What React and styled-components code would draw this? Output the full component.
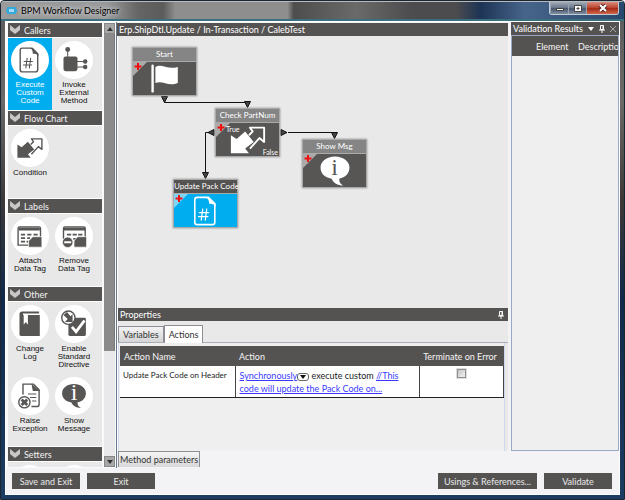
import React from 'react';
import styled, { createGlobalStyle } from 'styled-components';

const GlobalStyle = createGlobalStyle`
    * {
        box-sizing: border-box;
    }
    body {
        margin: 0;
        font-family: Lato, 'Open Sans', sans-serif;
        font-size: 9px;
        color: #1c1c1c;
    }
    button, input {
        font-family: inherit;
        font-size: inherit;
        margin: 0;
    }
`;

const glyphs = {
    code: (
        <g fill="none" stroke="currentColor" strokeWidth="2">
            <path d="M9 3h14l8 8v23a3 3 0 0 1-3 3H9a3 3 0 0 1-3-3V6a3 3 0 0 1 3-3z" />
            <path d="M20 3h4l8 8v4c-2-4-5-4-8-4 0-4-1-6-4-8z" fill="currentColor" stroke="none" />
            <path d="M16 17l-2 15M21 17l-2 15M11 22h13M10 27h13" strokeWidth="1.500" />
        </g>
    ),
    method: (
        <g fill="currentColor">
            <rect x="5" y="15" width="20" height="21" rx="3" />
            <circle cx="11" cy="5" r="3.500" />
            <circle cx="36" cy="22" r="3.200" />
            <circle cx="36" cy="30" r="3.200" />
            <path d="M11 6v10M24 22h10M24 30h10" stroke="currentColor" strokeWidth="1.500" />
        </g>
    ),
    condition: (
        <g fill="currentColor">
            <path d="M2 15v19h19l-4-5 9-7-9-11-9 8z" />
            <path
                d="M21 15l4-4-3-4h15v15l-5-4-10 11"
                fill="none"
                stroke="currentColor"
                strokeWidth="2"
                strokeLinejoin="round"
            />
        </g>
    ),
    attach: (
        <g fill="currentColor">
            <path d="M5 7h28a2 2 0 0 1 2 2v24H3V9a2 2 0 0 1 2-2z" fill="none" stroke="currentColor" strokeWidth="2" />
            <path d="M4 8h30v4H4z" />
            <path d="M7 18h6M16 18h6M25 18h6M7 23h6M16 23h4M7 28h6M15 28h3" stroke="currentColor" strokeWidth="2.500" />
            <path d="M24 21h13v15H18V27z" stroke="#fff" />
        </g>
    ),
    remove: (
        <g fill="currentColor">
            <path d="M5 24V9a2 2 0 0 1 2-2h27a2 2 0 0 1 2 2v18" fill="none" stroke="currentColor" strokeWidth="2" />
            <path d="M5 8h31v4H5z" />
            <path d="M10 18h6M18 18h6M26 18h6M19 24h4" stroke="currentColor" strokeWidth="2.500" />
            <path d="M25 21h13v15H20V27z" stroke="#fff" />
            <circle cx="11" cy="29" r="7.500" stroke="#fff" />
            <path d="M6 29h10" stroke="#fff" strokeWidth="3" />
        </g>
    ),
    log: (
        <g fill="currentColor">
            <path d="M5 9V6a4 4 0 0 1 4-4h24v3H10v2h24v30H7a2 2 0 0 1-2-2z" />
            <path d="M11 6h6v15l-3-4-3 4z" fill="#fff" />
        </g>
    ),
    enable: (
        <g fill="currentColor">
            <rect x="12" y="11" width="25" height="26" rx="2" />
            <path d="M17 24l6 7 12-16" fill="none" stroke="#fff" strokeWidth="4" />
            <circle cx="12" cy="11" r="9.500" fill="#fff" stroke="currentColor" strokeWidth="2" />
            <path d="M5 7l5-4 5 6 3-3v11H7l4-4z" />
        </g>
    ),
    raise: (
        <g fill="none" stroke="currentColor" strokeWidth="2">
            <path d="M10 18V3h15l8 8v21a3 3 0 0 1-3 3h-8" />
            <path d="M22 2l12 11H24z" fill="currentColor" stroke="none" />
            <path d="M17 17h12M20 22h9M23 27h6" strokeWidth="1.500" />
            <circle cx="12" cy="29" r="8" />
            <path d="M8 25l8 8M16 25l-8 8" strokeWidth="4" />
        </g>
    ),
    flag: (
        <g fill="currentColor">
            <rect x="3" y="2" width="3" height="35" rx="1.500" />
            <path d="M8 5c8-5 14 4 28 0v20c-12 5-19-4-28 0z" />
        </g>
    ),
    message: (
        <g fill="currentColor">
            <path d="M20 3c10 0 17 6 17 13s-5 12-12 13c0 4 1 6 5 8-7 0-12-3-14-8C8 28 3 23 3 16S10 3 20 3z" />
        </g>
    ),
};

const Svg = styled.svg`
    display: block;
    width: ${(p) => p.$size}px;
    height: ${(p) => p.$size}px;
    flex: none;
    overflow: visible;
`;

const Bubble = styled.span`
    display: grid;
    place-items: center;

    svg, b {
        grid-area: 1 / 1;
    }
    b {
        z-index: 1;
        padding-bottom: 8px;
        font: 24px/24px 'Liberation Serif', serif;
        color: ${(p) => p.$ink};
    }
`;

const Glyph = ({ name, size, ink = '#fff' }) => {
    const drawing = (
        <Svg $size={size} viewBox="0 0 40 40" aria-hidden="true">
            {glyphs[name]}
        </Svg>
    );
    if (name !== 'message') return drawing;
    return (
        <Bubble $ink={ink}>
            {drawing}
            <b>i</b>
        </Bubble>
    );
};

const Pin = () => (
    <Svg $size={8} viewBox="0 0 8 8" aria-hidden="true">
        <path d="M2.500 0.500h3v4h-3zM1 5h6M4 5v3M5 0.500v4" fill="none" stroke="#fff" />
    </Svg>
);

const groups = [
    {
        title: 'Callers',
        items: [
            { icon: 'code', label: 'Execute Custom Code', active: true },
            { icon: 'method', label: 'Invoke External Method' },
        ],
    },
    { title: 'Flow Chart', items: [{ icon: 'condition', label: 'Condition' }] },
    {
        title: 'Labels',
        items: [
            { icon: 'attach', label: 'Attach Data Tag' },
            { icon: 'remove', label: 'Remove Data Tag' },
        ],
    },
    {
        title: 'Other',
        items: [
            { icon: 'log', label: 'Change Log' },
            { icon: 'enable', label: 'Enable Standard Directive' },
            { icon: 'raise', label: 'Raise Exception' },
            { icon: 'message', label: 'Show Message' },
        ],
    },
    { title: 'Setters', items: [{ icon: 'code' }, { icon: 'code' }] },
];

const nodes = [
    { title: 'Start', icon: 'flag', size: 32, x: 14, y: 11 },
    { title: 'Check PartNum', icon: 'condition', size: 38, x: 97, y: 72, yes: 'True', no: 'False' },
    { title: 'Show Msg', icon: 'message', size: 34, x: 184, y: 103 },
    { title: 'Update Pack Code', icon: 'code', size: 32, x: 55, y: 143, active: true },
];

const Palette = () => (
    <Sidebar>
        <PaletteList>
            {groups.map((group) => (
                <section key={group.title}>
                    <GroupHeader type="button">
                        <Svg $size={10} viewBox="0 0 10 10" aria-hidden="true">
                            <path d="M0 0l5 4 5-4v5L5 9 0 5z" fill="#c8c8c8" />
                        </Svg>
                        {group.title}
                    </GroupHeader>
                    <GroupGrid>
                        {group.items.map((item, i) => (
                            <PaletteItem type="button" key={i} $active={item.active}>
                                <Disc>
                                    <Glyph name={item.icon} size={28} />
                                </Disc>
                                <span>{item.label}</span>
                            </PaletteItem>
                        ))}
                    </GroupGrid>
                </section>
            ))}
        </PaletteList>
        <ScrollBar>
            <ScrollButton type="button" aria-label="Scroll up">
                <Svg $size={6} viewBox="0 0 6 6" aria-hidden="true">
                    <path d="M0 5l3-4 3 4z" fill="#333" />
                </Svg>
            </ScrollButton>
            <ScrollTrack>
                <ScrollThumb />
            </ScrollTrack>
            <ScrollButton type="button" aria-label="Scroll down">
                <Svg $size={6} viewBox="0 0 6 6" aria-hidden="true">
                    <path d="M0 1l3 4 3-4z" fill="#333" />
                </Svg>
            </ScrollButton>
        </ScrollBar>
    </Sidebar>
);

const Diagram = () => (
    <Canvas>
        <Links viewBox="0 0 390 274" aria-hidden="true">
            <g fill="none" stroke="#111">
                <path d="M46.500 62v4.500h83V68" />
                <path d="M93 96.500h-5.500V139" />
                <path d="M170 96.500h46.500V99" />
            </g>
            <g fill="#444" stroke="#111">
                <path d="M43.500 60.500h6l-3 6z" />
                <path d="M126.500 65.500h6l-3 6z" />
                <path d="M96 93.500v6l-6-3z" />
                <path d="M163 93.500v6l6-3z" />
                <path d="M213.500 96.500h6l-3 6z" />
                <path d="M84.500 136.500h6l-3 6z" />
            </g>
        </Links>
        {nodes.map((node) => (
            <Node key={node.title} style={{ left: node.x, top: node.y }}>
                <NodeTitle $active={node.active}>{node.title}</NodeTitle>
                <NodeBody $active={node.active}>
                    <Corner viewBox="0 0 14 14" aria-hidden="true">
                        <path d="M0 0h14L0 14z" fill="#fff" fillOpacity="0.500" />
                        <path d="M5 1v7M1.500 4.500h7" stroke="#f01010" strokeWidth="2" />
                    </Corner>
                    {node.yes && <Port $side="left">{node.yes}</Port>}
                    <Glyph name={node.icon} size={node.size} ink="#575655" />
                    {node.no && <Port>{node.no}</Port>}
                </NodeBody>
            </Node>
        ))}
    </Canvas>
);

const Properties = () => (
    <PropertiesPanel>
        <PanelHeader>
            <PanelTitle>Properties</PanelTitle>
            <IconButton type="button" aria-label="Pin properties">
                <Pin />
            </IconButton>
        </PanelHeader>
        <Tabs role="tablist">
            <Tab type="button" role="tab">Variables</Tab>
            <Tab type="button" role="tab" aria-selected="true" $active>Actions</Tab>
        </Tabs>
        <TabPanel>
            <ActionTable>
                <colgroup>
                    <NameCol />
                    <col />
                    <ErrorCol />
                </colgroup>
                <thead>
                    <tr>
                        <th>Action Name</th>
                        <th>Action</th>
                        <th>Terminate on Error</th>
                    </tr>
                </thead>
                <tbody>
                    <tr>
                        <td>Update Pack Code on Header</td>
                        <Expression>
                            <a href="#mode">Synchronously</a>
                            <ModeButton type="button" aria-label="Change mode">
                                <Svg $size={6} viewBox="0 0 6 6" aria-hidden="true">
                                    <path d="M0 1h6L3 5z" fill="#111" />
                                </Svg>
                            </ModeButton>
                            {' execute custom '}
                            <a href="#code">{'//This code will update the Pack Code on...'}</a>
                        </Expression>
                        <CheckCell>
                            <Check type="checkbox" aria-label="Terminate on Error" />
                        </CheckCell>
                    </tr>
                </tbody>
            </ActionTable>
        </TabPanel>
    </PropertiesPanel>
);

const App = () => {
    return (
        <Window>
            <GlobalStyle />
            <TitleBar>
                <Svg $size={11} viewBox="0 0 11 11" aria-hidden="true">
                    <path d="M1 2h9v2h1v3h-1v2H1V7H0V4h1z" fill="#35a8dc" />
                    <rect x="3" y="4" width="5" height="3" fill="#a6dcf3" />
                </Svg>
                <h1>BPM Workflow Designer</h1>
                <WindowButtons>
                    <WindowButton type="button" aria-label="Minimize">
                        <Svg $size={10} viewBox="0 0 10 10" aria-hidden="true">
                            <rect x="1.500" y="5.500" width="7" height="2" fill="#fff" stroke="#444" />
                        </Svg>
                    </WindowButton>
                    <WindowButton type="button" aria-label="Maximize">
                        <Svg $size={10} viewBox="0 0 10 10" aria-hidden="true">
                            <path d="M1.500 2.500h7v6h-7z" fill="#fff" stroke="#444" />
                            <path d="M4 5h2v1H4z" fill="#444" stroke="#444" />
                        </Svg>
                    </WindowButton>
                    <WindowButton type="button" aria-label="Close" $close>
                        <Svg $size={10} viewBox="0 0 10 10" aria-hidden="true">
                            <path d="M2 2l6 6M8 2L2 8" stroke="#5d2b25" strokeWidth="4" />
                            <path d="M2 2l6 6M8 2L2 8" stroke="#fff" strokeWidth="2" />
                        </Svg>
                    </WindowButton>
                </WindowButtons>
            </TitleBar>
            <Client>
                <Body>
                    <Palette />
                    <Content>
                        <Workspace>
                            <Main>
                                <PanelHeader>
                                    <PanelTitle>Erp.ShipDtl.Update / In-Transaction / CalebTest</PanelTitle>
                                </PanelHeader>
                                <Diagram />
                                <Properties />
                            </Main>
                            <Validation>
                                <PanelHeader>
                                    <PanelTitle>Validation Results</PanelTitle>
                                    <HeaderTools>
                                        <IconButton type="button" aria-label="Panel menu">
                                            <Svg $size={6} viewBox="0 0 6 6" aria-hidden="true">
                                                <path d="M0 1h6L3 5z" fill="#fff" />
                                            </Svg>
                                        </IconButton>
                                        <IconButton type="button" aria-label="Pin results">
                                            <Pin />
                                        </IconButton>
                                        <IconButton type="button" aria-label="Close results">
                                            <Svg $size={6} viewBox="0 0 6 6" aria-hidden="true">
                                                <path d="M0 0l6 6M6 0L0 6" stroke="#aaa" />
                                            </Svg>
                                        </IconButton>
                                    </HeaderTools>
                                </PanelHeader>
                                <Results>
                                    <ResultsTable>
                                        <thead>
                                            <tr>
                                                <th>Element</th>
                                                <th>Description</th>
                                            </tr>
                                        </thead>
                                    </ResultsTable>
                                </Results>
                            </Validation>
                        </Workspace>
                        <BottomTabs>
                            <BottomTab type="button">Method parameters</BottomTab>
                        </BottomTabs>
                    </Content>
                </Body>
                <Footer>
                    <FooterButton type="button">Save and Exit</FooterButton>
                    <FooterButton type="button">Exit</FooterButton>
                    <Spacer />
                    <FooterButton type="button" $wide>Usings &amp; References...</FooterButton>
                    <FooterButton type="button">Validate</FooterButton>
                </Footer>
            </Client>
        </Window>
    );
};

const Window = styled.div`
    height: 100vh;
    display: flex;
    flex-direction: column;
    padding: 0 4px 4px;
    border: 1px solid #1c2632;
    border-radius: 4px 4px 0 0;
    overflow: hidden;
    background: linear-gradient(#5b5b5c, #6a6a6b 20%, #3c3838 40%, #10294a 60%, #1c3c62);
`;

const TitleBar = styled.header`
    height: 20px;
    flex: none;
    margin: 0 -4px;
    padding: 0 5px;
    display: flex;
    align-items: center;
    gap: 4px;
    border-top: 1px solid #b5babd;
    border-bottom: 2px solid #39707f;
    background: linear-gradient(90deg, #9b9b9c, #98999a 17%, #656565 22%, #5c5b5b 26%, #8e8e8e 28%, #8e8e8e 46%, #4e4d4e 47%, #6a6a6a 57%, #4c4c4e 66%, #4c4c4e 73%, #1d3455 77%, #47648a 84%, #27486e);

    h1 {
        flex: 1;
        margin: 0;
        font-size: 9px;
        font-weight: 400;
        color: #000;
        text-shadow: 0 0 5px #fff;
    }
`;

const WindowButtons = styled.div`
    align-self: flex-start;
    display: flex;
    border: 1px solid #c3cad2;
    border-top: 0;
    border-radius: 0 0 3px 3px;
    overflow: hidden;
`;

const WindowButton = styled.button`
    width: ${(p) => (p.$close ? 32 : 18)}px;
    height: 12px;
    padding: 0;
    display: grid;
    place-items: center;
    border: 0;
    border-left: 1px solid #9aa5b3;
    background: ${(p) => (p.$close ? 'linear-gradient(#d98b7c, #b8402c 50%, #a52a16 55%, #d0674c)' : 'linear-gradient(#a3abb5, #66748a 50%, #47566d 55%, #7f8ea3)')};
`;

const Client = styled.div`
    flex: 1;
    min-height: 0;
    display: flex;
    flex-direction: column;
    background: #f3f3f5;
    border: 1px solid #fff;
`;

const Body = styled.div`
    flex: 1;
    min-height: 0;
    display: flex;
`;

const Content = styled.div`
    flex: 1;
    min-width: 0;
    display: flex;
    flex-direction: column;
`;

const Workspace = styled.div`
    flex: 1;
    display: flex;
    min-height: 0;
`;

const Sidebar = styled.aside`
    flex: none;
    display: flex;
    gap: 2px;
    padding: 1px 1px 1px 2px;
    border-right: 1px solid #68788c;
    background: #fafafa;
`;

const PaletteList = styled.div`
    width: 94px;
    overflow: hidden;
    background: #e8e8e8;
`;

const GroupHeader = styled.button`
    width: 100%;
    height: 15px;
    padding: 0 2px;
    display: flex;
    align-items: center;
    gap: 4px;
    border: 0;
    border-bottom: 1px solid #fff;
    background: #555352;
    color: #f2f2f2;
    line-height: 13px;
`;

const GroupGrid = styled.div`
    display: grid;
    grid-template-columns: 44px 44px;
    grid-auto-rows: 72px;
    border-bottom: 1px solid #fff;
`;

const PaletteItem = styled.button`
    padding: 3px 0 0;
    display: flex;
    flex-direction: column;
    align-items: center;
    border: 0;
    background: ${(p) => (p.$active ? '#00adef' : 'transparent')};
    color: ${(p) => (p.$active ? '#fff' : '#111')};
    font: 8px/8px 'Liberation Sans', Arial, sans-serif;

    > span {
        max-width: 38px;
        margin-top: 2px;
    }
`;

const Disc = styled.div`
    width: 38px;
    height: 38px;
    flex: none;
    display: grid;
    place-items: center;
    border-radius: 50%;
    background: #fff;
    color: #575655;
`;

const ScrollBar = styled.div`
    width: 11px;
    display: flex;
    flex-direction: column;
    background: #e9e9eb;
`;

const ScrollButton = styled.button`
    height: 11px;
    padding: 0;
    display: grid;
    place-items: center;
    border: 1px solid #888;
    background: #a7a7a7;
`;

const ScrollTrack = styled.div`
    flex: 1;
`;

const ScrollThumb = styled.div`
    height: 75%;
    background: #8b8b8b;
    border-right: 1px solid #777;
`;

const Main = styled.main`
    flex: 1;
    min-width: 0;
    display: flex;
    flex-direction: column;
    padding-top: 1px;
`;

const PanelHeader = styled.div`
    height: 13px;
    flex: none;
    display: flex;
    align-items: center;
    justify-content: space-between;
    padding: 0 3px 0 2px;
    background: #555352;
    color: #fff;
`;

const PanelTitle = styled.h2`
    margin: 0;
    font-size: 9px;
    font-weight: 400;
    line-height: 12px;
    white-space: nowrap;
`;

const HeaderTools = styled.div`
    display: flex;
    align-items: center;
    gap: 4px;
`;

const IconButton = styled.button`
    padding: 0;
    border: 0;
    background: transparent;
`;

const Canvas = styled.div`
    position: relative;
    flex: 1;
    overflow: hidden;
    background: #e9e9e9;
    border-left: 1px solid #fff;
`;

const Links = styled.svg`
    position: absolute;
    top: 0;
    left: 0;
    width: 390px;
    height: 274px;
`;

const Node = styled.div`
    position: absolute;
    width: 65px;
    height: 49px;
    display: flex;
    flex-direction: column;
    border: 1px solid #aaa;
    box-shadow: 0 0 2px #888;
`;

const NodeTitle = styled.div`
    height: 13px;
    line-height: 12px;
    font-size: 8px;
    text-align: center;
    white-space: nowrap;
    color: #fff;
    background: ${(p) => (p.$active ? '#555352' : '#858585')};
`;

const NodeBody = styled.div`
    position: relative;
    flex: 1;
    min-height: 0;
    display: flex;
    align-items: center;
    justify-content: center;
    border-top: 1px solid #aaa;
    color: #fff;
    background: ${(p) => (p.$active ? '#00adef' : '#575655')};
`;

const Corner = styled.svg`
    position: absolute;
    top: 0;
    left: 0;
    width: 14px;
    height: 14px;
`;

const Port = styled.span`
    position: absolute;
    font-size: 7px;
    line-height: 8px;
    ${(p) => (p.$side === 'left' ? 'top: 2px; left: 10px;' : 'right: 1px; bottom: 0;')}
`;

const PropertiesPanel = styled.section`
    flex: none;
    display: flex;
    flex-direction: column;
    background: #e9e9e9;
    border-left: 1px solid #fff;
`;

const Tabs = styled.div`
    height: 22px;
    display: flex;
    align-items: flex-end;
    border-bottom: 1px solid #a9adb5;
`;

const Tab = styled.button`
    height: ${(p) => (p.$active ? 18 : 16)}px;
    margin-bottom: ${(p) => (p.$active ? -1 : 0)}px;
    padding: 0 4px;
    border: 1px solid #8c8e94;
    border-bottom: 0;
    background: ${(p) => (p.$active ? '#fff' : 'linear-gradient(#f3f3f3, #d5d5d5)')};
    color: #333;
    line-height: 14px;
`;

const TabPanel = styled.div`
    height: 108px;
    margin-right: 3px;
    padding: 3px 0 0 1px;
    background: #efefef;
    border-left: 1px solid #cfd8ee;
    border-right: 1px solid #cfd8ee;
`;

const ActionTable = styled.table`
    width: 100%;
    border-collapse: collapse;
    table-layout: fixed;

    th {
        height: 20px;
        padding: 0 4px;
        background: #555352;
        color: #f5f5f5;
        font-weight: 400;
        text-align: left;
        white-space: nowrap;
    }
    td {
        height: 31px;
        padding: 3px;
        vertical-align: top;
        background: #fff;
        border-right: 1px solid #444;
        border-bottom: 1px solid #222;
        font-size: 8px;
        line-height: 12px;
        white-space: nowrap;
    }
`;

const NameCol = styled.col`
    width: 30%;
`;

const ErrorCol = styled.col`
    width: 22%;
`;

const Expression = styled.td`
    && {
        padding: 3px 12px 1px 4px;
        white-space: normal;
        font-size: 9px;
        line-height: 13px;
    }
    a {
        color: #3a3aff;
    }
`;

const ModeButton = styled.button`
    width: 12px;
    height: 8px;
    padding: 0;
    display: inline-grid;
    place-items: center;
    vertical-align: text-bottom;
    border: 1px solid #666;
    border-radius: 3px;
    background: #fff;
`;

const CheckCell = styled.td`
    text-align: center;
`;

const Check = styled.input`
    appearance: none;
    width: 9px;
    height: 9px;
    border: 1px solid #8e8f8f;
    background: linear-gradient(135deg, #c5c5c5, #f2f2f2);
    outline: 1px solid #ddd;
`;

const Validation = styled.aside`
    flex: none;
    width: 108px;
    margin-left: 3px;
    display: flex;
    flex-direction: column;
`;

const Results = styled.div`
    flex: 1;
    overflow: hidden;
    background: #efefef;
    border: 1px solid #9aa8c8;
`;

const ResultsTable = styled.table`
    width: 100%;
    table-layout: fixed;
    border-collapse: collapse;
    background: #555352;
    color: #f5f5f5;

    th {
        width: 60px;
        height: 20px;
        padding: 0 0 0 24px;
        font-weight: 400;
        text-align: left;
        white-space: nowrap;
        overflow: hidden;
    }
    th + th {
        width: auto;
        padding-left: 6px;
    }
`;

const BottomTabs = styled.div`
    flex: none;
    height: 17px;
    padding: 0 1px;
`;

const BottomTab = styled.button`
    height: 16px;
    padding: 0 1px;
    border: 1px solid #8c8e94;
    border-bottom: 0;
    background: linear-gradient(#f5f5f5, #d8d8d8);
    color: #333;
    line-height: 14px;
`;

const Footer = styled.footer`
    flex: none;
    display: flex;
    gap: 7px;
    padding: 5px 7px 5px 6px;
`;

const FooterButton = styled.button`
    width: ${(p) => (p.$wide ? 99 : 68)}px;
    height: 16px;
    padding: 0;
    border: 0;
    background: #555352;
    color: #e8e8e8;
    line-height: 15px;
    white-space: nowrap;
`;

const Spacer = styled.div`
    flex: 1;
`;

export default App;
